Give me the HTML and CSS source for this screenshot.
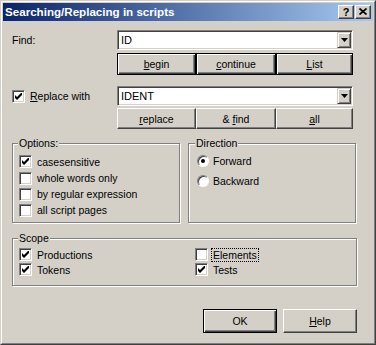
FILE: index.html
```html
<!DOCTYPE html>
<html>
<head>
<meta charset="utf-8">
<link rel="stylesheet" href="styles.css">
</head>
<body>
<div class="window">
  <div class="frame">
    <div class="titlebar">
      <span class="title">Searching/Replacing in scripts</span>
      <div class="tbtns">
        <span class="tbtn q">?</span>
        <span class="tbtn x"><svg width="8" height="7" viewBox="0 0 8 7"><path d="M0.5 0.5 L7.5 6.5 M7.5 0.5 L0.5 6.5" stroke="#000" stroke-width="1.7" fill="none"/></svg></span>
      </div>
    </div>
    <div class="content">
      <div class="row r1">
        <div class="lbl find">Find:</div>
        <div class="combo"><span class="val">ID</span><span class="drop"><svg width="7" height="4" viewBox="0 0 7 4"><polygon points="0,0 7,0 3.5,4" fill="#000"/></svg></span></div>
      </div>
      <div class="row r2">
        <div class="lbl"></div>
        <div class="btnrow">
          <button class="btn framed w1"><u>b</u>egin</button>
          <button class="btn framed w2"><u>c</u>ontinue</button>
          <button class="btn framed w3"><u>L</u>ist</button>
        </div>
      </div>
      <div class="row r3">
        <div class="lbl chkrow"><span class="cb on"><svg width="7" height="7" viewBox="0 0 7 7"><path d="M0 2 L2 4 L6 0 L7 0 L7 2 L2 7 L0 5 Z" fill="#000"/></svg></span><span class="cbl"><u>R</u>eplace with</span></div>
        <div class="combo"><span class="val">IDENT</span><span class="drop"><svg width="7" height="4" viewBox="0 0 7 4"><polygon points="0,0 7,0 3.5,4" fill="#000"/></svg></span></div>
      </div>
      <div class="row r4">
        <div class="lbl"></div>
        <div class="btnrow">
          <button class="btn w1"><u>r</u>eplace</button>
          <button class="btn w2">&amp; <u>f</u>ind</button>
          <button class="btn w3"><u>a</u>ll</button>
        </div>
      </div>
      <div class="groups">
        <fieldset class="grp options">
          <legend>Options:</legend>
          <div class="opt"><span class="cb on"><svg width="7" height="7" viewBox="0 0 7 7"><path d="M0 2 L2 4 L6 0 L7 0 L7 2 L2 7 L0 5 Z" fill="#000"/></svg></span><span class="cbl">casesensitive</span></div>
          <div class="opt"><span class="cb"></span><span class="cbl">whole words only</span></div>
          <div class="opt"><span class="cb"></span><span class="cbl">by regular expression</span></div>
          <div class="opt"><span class="cb"></span><span class="cbl">all script pages</span></div>
        </fieldset>
        <fieldset class="grp direction">
          <legend>Direction</legend>
          <div class="rad"><span class="radio on"></span><span class="cbl">Forward</span></div>
          <div class="rad"><span class="radio"></span><span class="cbl">Backward</span></div>
        </fieldset>
      </div>
      <fieldset class="grp scope">
        <legend>Scope</legend>
        <div class="scopegrid">
          <div class="opt"><span class="cb on"><svg width="7" height="7" viewBox="0 0 7 7"><path d="M0 2 L2 4 L6 0 L7 0 L7 2 L2 7 L0 5 Z" fill="#000"/></svg></span><span class="cbl">Productions</span></div>
          <div class="opt"><span class="cb"></span><span class="cbl focus">Elements</span></div>
          <div class="opt"><span class="cb on"><svg width="7" height="7" viewBox="0 0 7 7"><path d="M0 2 L2 4 L6 0 L7 0 L7 2 L2 7 L0 5 Z" fill="#000"/></svg></span><span class="cbl">Tokens</span></div>
          <div class="opt"><span class="cb on"><svg width="7" height="7" viewBox="0 0 7 7"><path d="M0 2 L2 4 L6 0 L7 0 L7 2 L2 7 L0 5 Z" fill="#000"/></svg></span><span class="cbl">Tests</span></div>
        </div>
      </fieldset>
      <div class="actions">
        <button class="btn framed act">OK</button>
        <button class="btn act"><u>H</u>elp</button>
      </div>
    </div>
  </div>
</div>
</body>
</html>
```

FILE: styles.css
```css
html, body {
  margin: 0;
  padding: 0;
  background: #d4d0c8;
}
body {
  font-family: "Liberation Sans", Arial, sans-serif;
  font-size: 10.5px;
  color: #000;
}
.window {
  width: 376px;
  height: 345px;
  box-sizing: border-box;
  border: 1px solid;
  border-color: #d4d0c8 #404040 #404040 #d4d0c8;
  background: #d4d0c8;
}
.frame {
  height: 100%;
  box-sizing: border-box;
  border: 1px solid;
  border-color: #fff #808080 #808080 #fff;
  padding: 1px;
}
.titlebar {
  height: 18px;
  display: flex;
  align-items: center;
  justify-content: space-between;
  background: linear-gradient(90deg, #0a246a, #a6caf0);
  padding: 0 2px 0 2px;
}
.title {
  color: #fff;
  font-weight: bold;
  font-size: 11.6px;
  line-height: 18px;
  white-space: nowrap;
}
.tbtns {
  display: flex;
  gap: 1px;
}
.tbtn {
  width: 16px;
  height: 14px;
  box-sizing: border-box;
  background: #d4d0c8;
  border: 1px solid;
  border-color: #fff #404040 #404040 #fff;
  box-shadow: inset -1px -1px #808080;
  display: flex;
  align-items: center;
  justify-content: center;
}
.tbtn.q {
  font-weight: bold;
  font-size: 11px;
  line-height: 12px;
}
.tbtn.x svg {
  display: block;
  margin-top: -1px;
}
.content {
  padding: 9px 16px 0 9px;
  display: flex;
  flex-direction: column;
}
.row {
  display: flex;
}
.lbl {
  width: 105px;
  flex: none;
}
.find {
  padding-top: 4px;
}
.r1 { height: 20px; }
.r2 { height: 22px; margin-top: 3px; }
.r3 { height: 20px; margin-top: 11px; }
.r4 { height: 21px; margin-top: 2px; }
.combo {
  width: 236px;
  height: 20px;
  box-sizing: border-box;
  border: 1px solid;
  border-color: #808080 #fff #fff #808080;
  box-shadow: inset 1px 1px #404040, inset -1px -1px #d4d0c8;
  background: #fff;
  padding: 2px 2px 2px 3px;
  display: flex;
  align-items: center;
  justify-content: space-between;
}
.val {
  font-size: 11px;
  line-height: 14px;
}
.drop {
  width: 14px;
  height: 16px;
  box-sizing: border-box;
  margin-right: -1px;
  background: #d4d0c8;
  border: 1px solid;
  border-color: #d4d0c8 #404040 #404040 #d4d0c8;
  box-shadow: inset 1px 1px #fff, inset -1px -1px #808080;
  display: flex;
  align-items: center;
  justify-content: center;
}
.drop svg { display: block; }
.btnrow {
  display: flex;
  height: 100%;
}
.btn {
  font: inherit;
  color: #000;
  margin: 0;
  padding: 0;
  height: 100%;
  box-sizing: border-box;
  background: #d4d0c8;
  border: 1px solid;
  border-color: #fff #404040 #404040 #fff;
  box-shadow: inset -1px -1px #808080;
  text-align: center;
}
.btn.framed {
  border: 1px solid #000;
  box-shadow: inset 1px 1px #fff, inset -1px -1px #404040, inset -2px -2px #808080;
}
.w1 { width: 79px; }
.w2 { width: 80px; }
.w3 { width: 77px; }
.chkrow {
  display: flex;
  align-items: center;
}
.cb {
  width: 13px;
  height: 13px;
  flex: none;
  box-sizing: border-box;
  border: 1px solid;
  border-color: #808080 #fff #fff #808080;
  box-shadow: inset 1px 1px #404040, inset -1px -1px #d4d0c8;
  background: #fff;
  padding: 2px 0 0 2px;
}
.cb svg { display: block; }
.cbl {
  margin-left: 5px;
  white-space: nowrap;
}
.groups {
  display: flex;
  gap: 8px;
  margin-top: 8px;
}
.grp {
  margin: 0;
  box-sizing: border-box;
  border: 1px solid #808080;
  box-shadow: inset 1px 1px #fff, 1px 1px #fff;
  min-width: 0;
}
.grp legend {
  padding: 0 1px;
  margin-left: -1px;
  line-height: 13px;
  background: #d4d0c8;
}
.options {
  width: 168px;
  height: 86px;
  padding: 3px 6px 0 6px;
}
.opt {
  height: 16px;
  display: flex;
  align-items: center;
}
.options .opt:first-of-type {
  height: 17px;
}
.direction {
  width: 168px;
  height: 86px;
  padding: 1px 8px 0 8px;
}
.direction legend {
  margin-left: -2px;
}
.rad {
  height: 20px;
  display: flex;
  align-items: center;
}
.radio {
  width: 12px;
  height: 12px;
  flex: none;
  box-sizing: border-box;
  border-radius: 50%;
  border: 1px solid;
  border-color: #808080 #fff #fff #808080;
  box-shadow: inset 1px 1px #404040;
  background: #fff;
  display: flex;
  align-items: center;
  justify-content: center;
}
.radio.on::after {
  content: "";
  width: 4px;
  height: 4px;
  border-radius: 50%;
  background: #000;
}
.rad .cbl {
  margin-left: 4px;
}
.scope {
  width: 345px;
  height: 54px;
  margin-top: 9px;
  padding: 2px 6px 0 6px;
}
.scopegrid {
  display: grid;
  grid-template-columns: 176px 1fr;
}
.scopegrid .opt {
  height: 15px;
}
.scopegrid .cbl {
  margin-left: 3px;
  padding: 0 1px;
  border: 1px solid transparent;
  line-height: 12px;
}
.scopegrid .cbl.focus {
  border: 1px dotted #000;
}
.actions {
  display: flex;
  justify-content: flex-end;
  gap: 6px;
  margin-top: 23px;
  height: 24px;
}
.act {
  width: 74px;
}
```
